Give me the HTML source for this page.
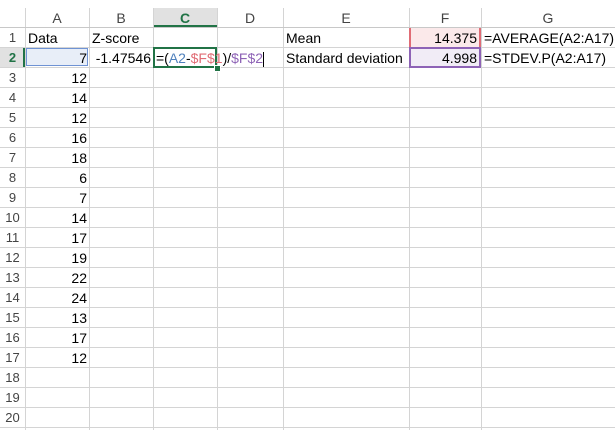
<!DOCTYPE html><html><head><style>
body{margin:0;width:615px;height:430px;overflow:hidden;background:#fff;font-family:"Liberation Sans",Arial,sans-serif;font-size:14px;position:relative}
.v{position:absolute;top:8px;bottom:0;width:1px;background:#d4d4d4}
.h{position:absolute;left:0;right:0;height:1px;background:#d4d4d4}
.ch{position:absolute;top:8px;height:19px;line-height:20px;text-align:center;color:#444;font-size:14px}
.rh{position:absolute;left:0;width:25px;text-align:center;color:#444;height:20px;line-height:22px;font-size:13px}
.c{position:absolute;height:20px;line-height:22px;color:#000;white-space:nowrap}
.r{text-align:right}
</style></head><body>
<div style="position:absolute;left:153px;top:8px;width:64px;height:17px;background:#e1e1e1;border-bottom:2px solid #217346"></div>
<div style="position:absolute;left:0;top:47px;width:25px;height:20px;background:#e1e1e1"></div>
<div style="position:absolute;left:23px;top:47px;width:2px;height:20px;background:#217346"></div>
<div class="v" style="left:25px"></div><div class="v" style="left:89px"></div><div class="v" style="left:153px"></div><div class="v" style="left:217px"></div><div class="v" style="left:283px"></div><div class="v" style="left:409px"></div><div class="v" style="left:481px"></div>
<div class="h" style="top:27px;background:#c8c8c8"></div>
<div id="rows"></div>
<div class="ch" style="left:25px;width:64px">A</div><div class="ch" style="left:89px;width:64px">B</div><div class="ch" style="left:153px;width:64px;color:#217346;font-weight:bold">C</div><div class="ch" style="left:217px;width:66px">D</div><div class="ch" style="left:283px;width:126px">E</div><div class="ch" style="left:409px;width:72px">F</div><div class="ch" style="left:481px;width:134px">G</div>
<div style="position:absolute;left:26px;top:48px;width:62px;height:18px;background:#e8eef8;border:1px solid #6f93d4;box-sizing:border-box"></div>
<div style="position:absolute;left:409px;top:28px;width:72px;height:19px;background:#fbe9ea;border-left:2px solid #e06c75;border-right:2px solid #e06c75;box-sizing:border-box"></div>
<div style="position:absolute;left:409px;top:47px;width:72px;height:21px;background:#f1ecf6;border:2px solid #8e63b6;box-sizing:border-box"></div>
<div style="position:absolute;left:153px;top:47px;width:64px;height:21px;border:2px solid #217346;box-sizing:border-box"></div>
<div style="position:absolute;left:214px;top:65px;width:5px;height:5px;background:#217346;border:1px solid #fff"></div>
<div class="c" style="left:28px;top:27px">Data</div>
<div class="c" style="left:92px;top:27px">Z-score</div>
<div class="c" style="left:286px;top:27px">Mean</div>
<div class="c r" style="left:409px;width:68px;top:27px">14.375</div>
<div class="c" style="left:484px;top:27px">=AVERAGE(A2:A17)</div>
<div class="c r" style="left:89px;width:62px;top:47px">-1.47546</div>
<div class="c" style="left:156px;top:47px">=(<span style="color:#4f81bd">A2</span>-<span style="color:#e06c75">$F$1</span>)/<span style="color:#8e63b6">$F$2</span><span style="display:inline-block;width:1px;height:15px;background:#000;vertical-align:middle"></span></div>
<div class="c" style="left:286px;top:47px">Standard deviation</div>
<div class="c r" style="left:409px;width:68px;top:47px">4.998</div>
<div class="c" style="left:484px;top:47px">=STDEV.P(A2:A17)</div>
<div id="data"></div>
<script>
var vals=[7,12,14,12,16,18,6,7,14,17,19,22,24,13,17,12],h='',d='';
for(var i=1;i<=20;i++){var t=27+(i-1)*20;h+='<div class="h" style="top:'+(t+20)+'px"></div><div class="rh" style="top:'+t+'px;'+(i==2?'color:#217346;font-weight:bold':'')+'">'+i+'</div>';
if(i>=2&&i<=17)d+='<div class="c r" style="left:25px;width:62px;top:'+t+'px">'+vals[i-2]+'</div>';}
document.getElementById('rows').innerHTML=h;document.getElementById('data').innerHTML=d;
</script>
</body></html>
